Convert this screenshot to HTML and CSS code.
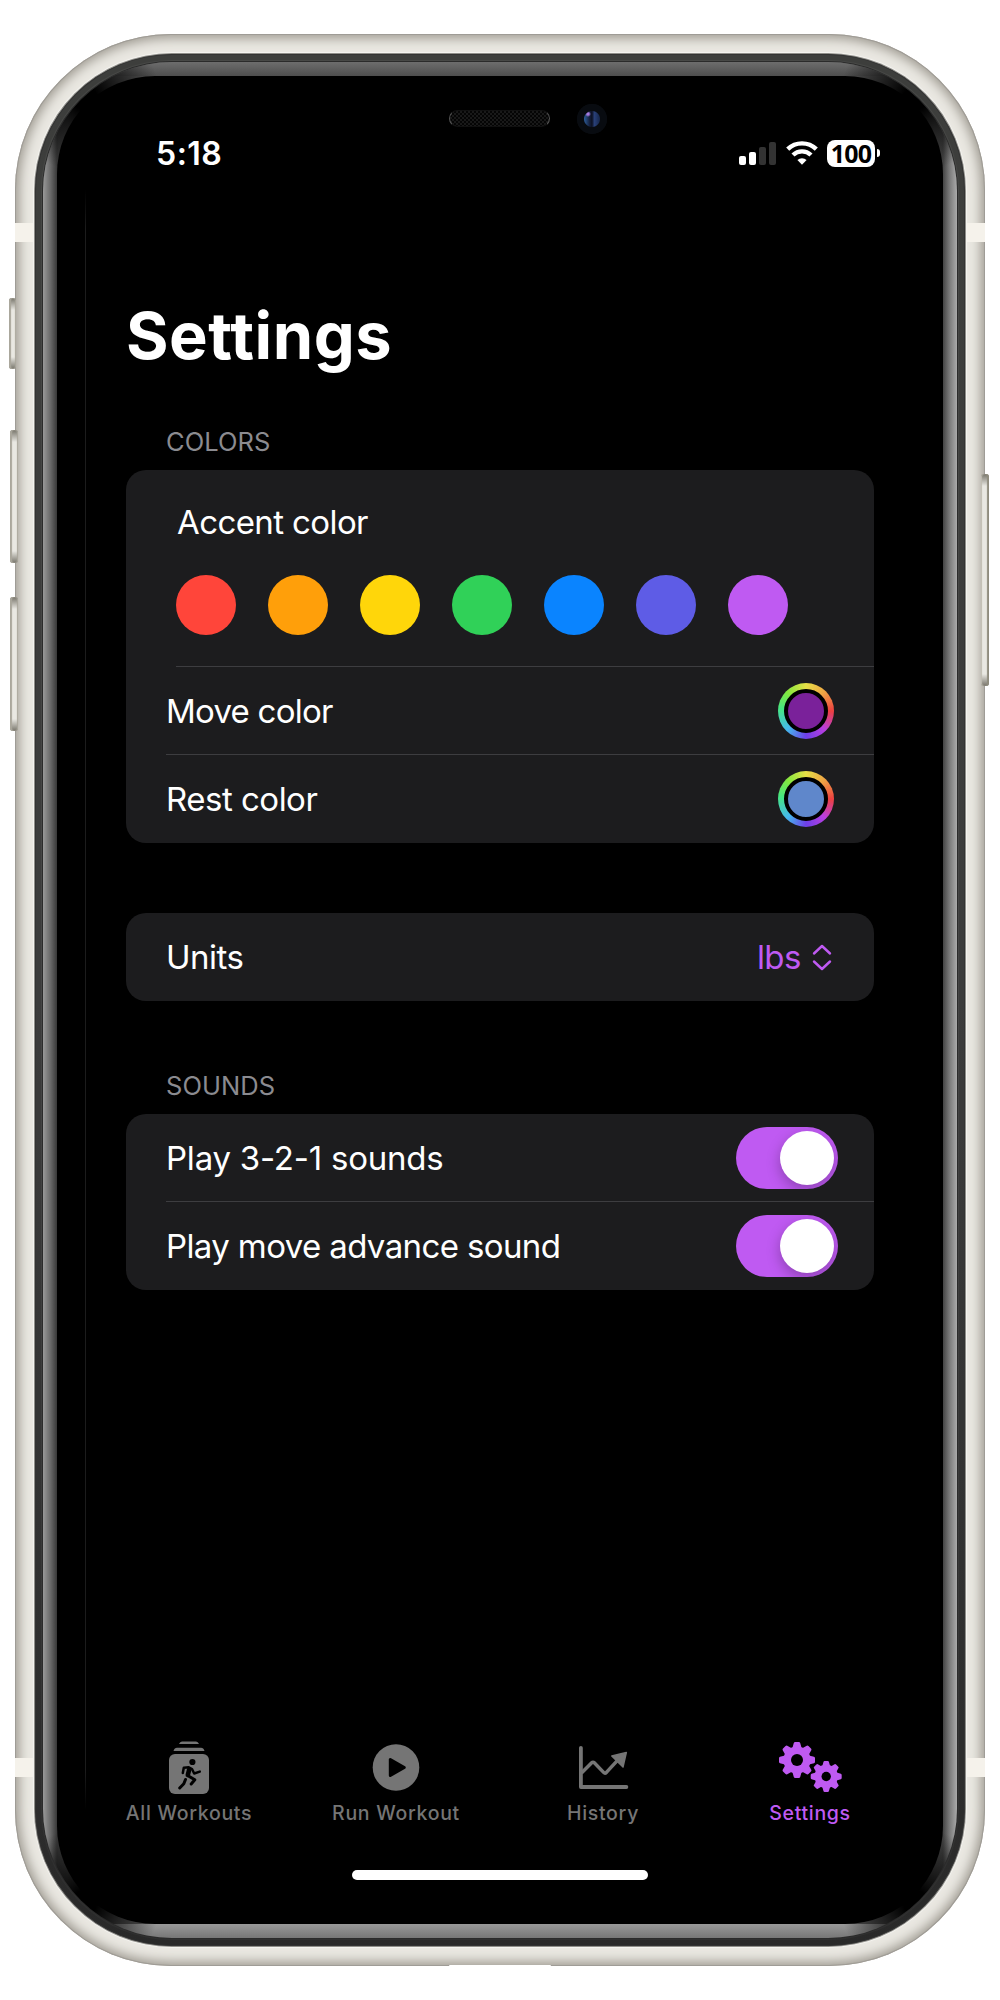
FILE: index.html
```
<!DOCTYPE html>
<html lang="en">
<head>
<meta charset="utf-8">
<title>Settings</title>
<link rel="stylesheet" href="styles.css">
</head>
<body>
<div class="phone">
  <i class="key key-mute"></i><i class="key key-up"></i><i class="key key-down"></i><i class="key key-side"></i>
  <i class="band band-tl"></i><i class="band band-tr"></i><i class="band band-bl"></i><i class="band band-br"></i>
  <i class="port"></i>
  <div class="bezel"><div class="glass">
    <div class="screen">
      <i class="edge-line"></i>
      <i class="speaker"></i><i class="camera"></i>
      <header class="status">
        <span class="time">5:18</span>
        <span class="indicators">
          <svg class="signal" width="38" height="23" viewBox="0 0 38 23"><g fill="#fff"><rect y="14" width="7" height="9" rx="2"/><rect x="10" y="10" width="7" height="13" rx="2"/></g><g fill="#333"><rect x="20" y="5" width="7" height="18" rx="2"/><rect x="30" width="7" height="23" rx="2"/></g></svg>
          <svg class="wifi" width="32" height="24" viewBox="0 0 32 24"><g fill="none" stroke="#fff" stroke-width="4.4"><path d="M1.7 8.2a20.5 20.5 0 0 1 28.6 0"/><path d="M7 14a13 13 0 0 1 18 0"/></g><path fill="#fff" d="M11.4 19a6.8 6.8 0 0 1 9.2 0L16 23.7z"/></svg>
          <span class="battery">100</span><i class="nub"></i>
        </span>
      </header>
      <main class="content">
        <h1>Settings</h1>
        <h2>COLORS</h2>
        <section class="card">
          <div class="accent">
            <div class="accent-label">Accent color</div>
            <div class="swatches"><i class="dot red"></i><i class="dot orange"></i><i class="dot yellow"></i><i class="dot green"></i><i class="dot blue"></i><i class="dot indigo"></i><i class="dot purple"></i></div>
          </div>
          <div class="row line"><span class="tight">Move color</span><span class="well move"><i></i></span></div>
          <div class="row"><span>Rest color</span><span class="well rest"><i></i></span></div>
        </section>
        <section class="card units">
          <div class="row"><span>Units</span><span class="picker">lbs<svg width="20" height="27" viewBox="0 0 20 27" fill="none" stroke="#bf5af2" stroke-width="2.4" stroke-linecap="round" stroke-linejoin="round"><path d="M2 9.5 10 2l8 7.500M2 17.500l8 7.500 8-7.500"/></svg></span></div>
        </section>
        <h2 class="sounds">SOUNDS</h2>
        <section class="card">
          <div class="row line"><span class="loose">Play 3-2-1 sounds</span><span class="toggle"><i></i></span></div>
          <div class="row"><span class="snug">Play move advance sound</span><span class="toggle"><i></i></span></div>
        </section>
      </main>
      <nav class="tabs">
        <div class="tab"><svg width="42" height="56" viewBox="168 1740 42 56"><g fill="#757575"><path d="M179 1744q1-2.500 3-2.500h14q2 0 3 2.500zM173.500 1751q1-3.200 3.500-3.200h24q2.500 0 3.500 3.200z"/><rect x="169" y="1754" width="40" height="40" rx="6"/></g><circle cx="192.400" cy="1762" r="3.100"/><g fill="none" stroke="#000" stroke-linecap="round" stroke-linejoin="round"><path stroke-width="2.500" d="M182.800 1773l1-5.200 5-.5 3.200 1.700 2.200 4.500 5.600-1.900"/><path stroke-width="4.600" d="M189.200 1769.500l-1.400 5.500"/><path stroke-width="3" d="M188.500 1776l6.300 3.800-3.600 4.200M185.500 1779.500l-1.700 4.300-4.100 4.200"/></g></svg><span>All Workouts</span></div>
        <div class="tab"><svg width="48" height="56" viewBox="372 1740 48 56"><circle cx="396" cy="1767.500" r="23.300" fill="#757575"/><path d="M390.300 1759.500v16l14-8z" stroke="#000" stroke-width="3" stroke-linejoin="round"/></svg><span>Run Workout</span></div>
        <div class="tab"><svg width="52" height="56" viewBox="577 1740 52 56"><g fill="none" stroke="#757575" stroke-width="3.800" stroke-linecap="round" stroke-linejoin="round"><path d="M580.900 1747.800v39.200h45.500"/><path stroke-width="3.500" stroke-linecap="butt" d="M581.500 1773l10.200-10.200q1.300-1.300 2.600 0l9.300 9.600q1.400 1.400 2.800 0l12.500-13.500"/></g><path fill="#757575" stroke="#757575" stroke-width="1.500" stroke-linejoin="round" d="M611.800 1756l14.500-3.500-3.300 14.500z"/></svg><span>History</span></div>
        <div class="tab active"><svg width="66" height="56" viewBox="777 1740 66 56">
          <defs><g id="gear"><circle r="13.600"/><g id="teeth"><path id="tooth" d="M-4.600-12l1.400-5q.3-1 1.400-1h3.600q1.100 0 1.400 1l1.400 5zM-4.600 12l1.400 5q.3 1 1.400 1h3.600q1.100 0 1.400-1l1.400-5z"/><use href="#tooth" transform="rotate(90)"/></g><use href="#teeth" transform="rotate(45)"/></g></defs>
          <g fill="#bf5af2"><use href="#gear" transform="translate(797 1760)"/><use href="#gear" transform="translate(826.200 1776.500) scale(.86)"/></g><circle cx="797" cy="1760" r="6"/><circle cx="826.200" cy="1776.500" r="4.700"/></svg><span>Settings</span></div>
      </nav>
      <div class="home"></div>
    </div>
  </div></div>
</div>
</body>
</html>
```
FILE: styles.css
```
* { box-sizing: border-box; }
body { margin: 0; background: #fff; font-family: Inter, "Liberation Sans", sans-serif; color: #fff; }
svg { display: block; flex: none; }

/* device */
.phone { position: relative; width: 970px; height: 1932px; margin: 34px 15px; padding: 20px; border-radius: 156px; background: #eae8e2;
  box-shadow: inset 0 0 0 1px #9f9c96, inset 0 0 12px 4px #9b978e; }
.bezel { height: 100%; padding: 8px; border-radius: 137px; background: linear-gradient(#474846, #464646 50%, #303030); box-shadow: 0 0 0 1px #8f8e89, 0 0 0 2px #f4f3ef, inset 0 0 0 1px #333, inset 0 0 0 6px #0002; }
.glass { height: 100%; padding: 14px; border-radius: 129px; overflow: hidden; box-shadow: 0 0 0 1px #2b2b2b;
  background:
    radial-gradient(circle at 42px 36px, #000 12px, #0000 75px) 0 0 / 50% 50% no-repeat,
    radial-gradient(circle at calc(100% - 42px) 36px, #000 12px, #0000 75px) 100% 0 / 50% 50% no-repeat,
    radial-gradient(circle at 42px calc(100% - 36px), #000 12px, #0000 75px) 0 100% / 50% 50% no-repeat,
    radial-gradient(circle at calc(100% - 42px) calc(100% - 36px), #000 12px, #0000 75px) 100% 100% / 50% 50% no-repeat,
    linear-gradient(#6d6d6d, #4e4e4e) 50% 0 / calc(100% - 140px) 14px no-repeat,
    linear-gradient(#999, #777) 50% 100% / calc(100% - 140px) 14px no-repeat,
    linear-gradient(90deg, #999, #666 8px, #383838 14px, #555 30px, #555 calc(100% - 30px), #444 calc(100% - 14px), #777 calc(100% - 8px), #aaa); }
.screen { position: relative; display: flex; flex-direction: column; height: 100%; background: #000; border-radius: 98px; }
.edge-line { position: absolute; left: 28px; top: 114px; width: 1px; height: 1620px; background: linear-gradient(#0000, #1c1c1c 40px, #1c1c1c 1580px, #0000); }
.speaker { position: absolute; left: 392px; top: 34px; width: 101px; height: 17px; border-radius: 9px; border: 1px solid #111; border-left-color: #555; border-right-color: #555; background: repeating-conic-gradient(#191919 0 25%, #050505 0 50%) 0 0 / 4px 4px; }
.camera { position: absolute; left: 520px; top: 28px; width: 30px; height: 30px; border-radius: 50%; background: radial-gradient(circle at 11px 10px, #a77be0 0 1px, #0000 3px), linear-gradient(90deg, #2d5d9a, #15203d 35%, #0c1020 50%, #294078 65%, #16264a) 7px 7px / 16px 16px no-repeat, #080b10; }
.camera::after { content: ""; display: block; width: 30px; height: 30px; border-radius: 50%; background: radial-gradient(circle, #0000 7.500px, #080b10 8.500px); }
.key { position: absolute; border-radius: 3px; background: linear-gradient(#77746a, #e9e8e2 12px, #e9e8e2 calc(100% - 12px), #77746a); box-shadow: inset 2px 0 1px #aaa79c, inset -1px 0 1px #aaa79c; }
.key-mute { left: -6px; top: 264px; width: 7px; height: 71px; }
.key-up { left: -5px; top: 396px; width: 8px; height: 133px; }
.key-down { left: -5px; top: 563px; width: 8px; height: 134px; }
.key-side { left: 966px; top: 440px; width: 8px; height: 212px; box-shadow: inset -2px 0 1px #8f8c7e, inset 1px 0 1px #c0bdb2; }
.band { position: absolute; width: 18px; height: 19px; background: #f5f2eb; }
.band-tl { left: 0; top: 189px; }
.band-tr { right: 0; top: 189px; }
.band-bl { left: 0; top: 1724px; }
.band-br { right: 0; top: 1724px; }
.port { position: absolute; left: 434px; bottom: 0; width: 102px; height: 1px; border-radius: 4px 4px 0 0; background: #fff; }

/* status bar */
.status { display: flex; align-items: flex-end; justify-content: space-between; height: 92px; padding: 0 63px 0 99px; }
.time { font-size: 32px; font-weight: 600; line-height: 32px; letter-spacing: .5px; position: relative; top: 2px; }
.indicators { display: flex; align-items: center; height: 30px; }
.wifi { margin: 0 9px 0 9px; }
.battery { width: 48px; height: 27px; border-radius: 8px; background: #fff; color: #000; text-align: center; font: 700 25px/26px "Noto Sans", "Open Sans", sans-serif; letter-spacing: -.8px; }
.nub { width: 3px; height: 8px; margin-left: 2px; border-radius: 0 4px 4px 0; background: #fff; }

/* settings list */
.content { padding: 129px 69px 0; }
h1 { margin: 0; height: 117px; font-size: 65px; line-height: 78px; font-weight: 700; letter-spacing: .5px; }
h2 { margin: 0 0 0 40px; height: 56px; font-size: 25.500px; line-height: 56px; font-weight: 400; color: #8b8b90; letter-spacing: .05px; }
.sounds { margin-top: 57px; }
.card { overflow: hidden; width: 748px; border-radius: 20px; background: #1c1c1e; font-size: 33px; letter-spacing: -.5px; }
.units { margin-top: 70px; }
.accent { height: 197px; padding: 33px 50px 0 51px; background: linear-gradient(#3d3d40, #3d3d40) 50px 196px / 100% 1px no-repeat; }
.accent-label { height: 72px; line-height: 39px; letter-spacing: -.6px; }
.swatches { display: flex; gap: 32px; margin-left: -1px; }
.dot { width: 60px; height: 60px; border-radius: 50%; }
.red { background: #ff453a; } .orange { background: #ff9f0a; } .yellow { background: #ffd60a; } .green { background: #30d158; }
.blue { background: #0a84ff; } .indigo { background: #5e5ce6; } .purple { background: #bf5af2; }
.row { display: flex; align-items: center; justify-content: space-between; height: 88px; padding: 0 36px 0 40px; }
.tight { letter-spacing: -.75px; }
.snug { letter-spacing: -.62px; }
.loose { letter-spacing: -.22px; }
.line { background: linear-gradient(#3d3d40, #3d3d40) 40px 87px / 100% 1px no-repeat; }
.well { width: 56px; height: 56px; margin-right: 4px; padding: 6px; border-radius: 50%; background: conic-gradient(#e6e046, #efa244 45deg, #ec4040 90deg, #b93ee0 135deg, #6d3fe8 180deg, #45b8ee 225deg, #45e683 275deg, #83e83f 315deg, #e6e046); }
.well i { display: block; width: 44px; height: 44px; border: 4px solid #000; border-radius: 50%; }
.move i { background: #7a219a; }
.rest i { background: #5f87cb; }
.picker { display: flex; align-items: center; gap: 11px; margin-right: 6px; color: #bf5af2; }
.toggle { width: 102px; height: 62px; padding: 4px; border-radius: 31px; background: #bf5af2; overflow: hidden; }
.toggle i { display: block; width: 54px; height: 54px; margin-left: 40px; border-radius: 50%; background: #fff; box-shadow: 0 5px 14px #0004; }

/* tab bar */
.tabs { display: grid; grid-template-columns: repeat(4, 207px); margin: auto 30px 45px 28px; color: #757575; }
.tab { display: flex; flex-direction: column; align-items: center; gap: 5px; font-size: 19.500px; line-height: 24px; font-weight: 450; letter-spacing: .7px; }
.tab span { padding-left: 1px; }
.active { color: #bf5af2; }
.home { flex: none; width: 296px; height: 10px; margin: 0 auto 44px; border-radius: 5px; background: #fff; }
```
